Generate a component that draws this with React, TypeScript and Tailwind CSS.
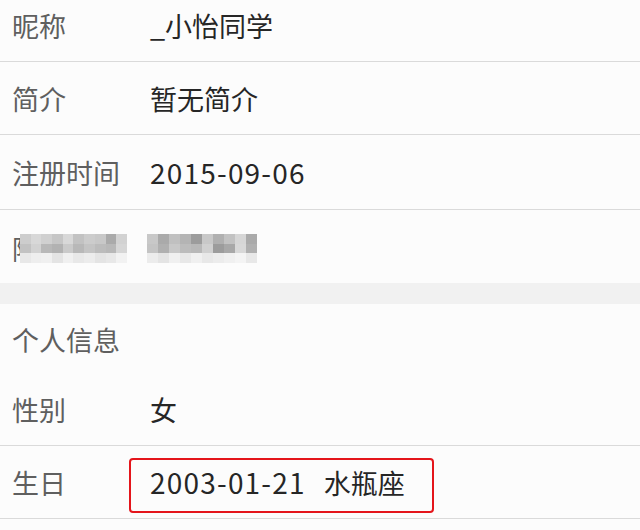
const labelMosaic = [
  ['bg-[#cdcdcd]', 'bg-[#d8d8d8]', 'bg-[#d0d0d0]', 'bg-[#c6c6c6]', 'bg-[#d8d8d8]', 'bg-[#c2c2c2]', 'bg-[#cccccc]', 'bg-[#c8c8c8]', 'bg-[#aaaaaa]', 'bg-[#d2d2d2]'],
  ['bg-[#c2c2c2]', 'bg-[#d2d2d2]', 'bg-[#b8b8b8]', 'bg-[#b2b2b2]', 'bg-[#cacaca]', 'bg-[#b8b8b8]', 'bg-[#c4c4c4]', 'bg-[#bcbcbc]', 'bg-[#b8b8b8]', 'bg-[#d6d6d6]'],
  ['bg-[#e8e8e8]', 'bg-[#eeeeee]', 'bg-[#f0f0f0]', 'bg-[#e4e4e4]', 'bg-[#f0f0f0]', 'bg-[#e8e8e8]', 'bg-[#ececec]', 'bg-[#e4e4e4]', 'bg-[#e8e8e8]', 'bg-[#f2f2f2]'],
];

const valueMosaic = [
  ['bg-[#c8c8c8]', 'bg-[#aaaaaa]', 'bg-[#c0c0c0]', 'bg-[#b4b4b4]', 'bg-[#9c9c9c]', 'bg-[#c8c8c8]', 'bg-[#b0b0b0]', 'bg-[#c2c2c2]', 'bg-[#d6d6d6]', 'bg-[#aaaaaa]'],
  ['bg-[#c4c4c4]', 'bg-[#b0b0b0]', 'bg-[#c8c8c8]', 'bg-[#bcbcbc]', 'bg-[#b8b8b8]', 'bg-[#d0d0d0]', 'bg-[#9c9c9c]', 'bg-[#a8a8a8]', 'bg-[#d8d8d8]', 'bg-[#b0b0b0]'],
  ['bg-[#ececec]', 'bg-[#e4e4e4]', 'bg-[#f0f0f0]', 'bg-[#e8e8e8]', 'bg-[#f0f0f0]', 'bg-[#e8e8e8]', 'bg-[#ececec]', 'bg-[#f0f0f0]', 'bg-[#f4f4f4]', 'bg-[#e8e8e8]'],
];

function Mosaic({ cells, width }: { cells: string[][]; width: string }) {
  return (
    <div className={`grid grid-cols-10 ${width}`}>
      {cells.flat().map((c, i) => (
        <div key={i} className={`h-[9.5px] ${c}`} />
      ))}
    </div>
  );
}

function Row({ label, children, divider = true, h = 'h-[73px]' }: { label: string; children?: React.ReactNode; divider?: boolean; h?: string }) {
  return (
    <div className={`flex items-center ${h} ${divider ? 'border-b border-[#dadada]' : ''}`}>
      <div className="w-[150px] pl-[12px] text-[#5f5f5f]">{label}</div>
      {children && <div className="text-[#262626]">{children}</div>}
    </div>
  );
}

// 数字在原图里更宽一点
function Digits({ children }: { children: string }) {
  return <span className="text-[28px] tracking-[1.2px]">{children}</span>;
}

export default function App() {
  return (
    <div
      className="w-[640px] h-[530px] overflow-hidden bg-[#fcfcfc] text-[27px] leading-none"
      style={{ fontFamily: '"Noto Sans CJK SC", "Noto Sans", sans-serif' }}
    >
      <Row label="昵称" h="h-[62px] pb-[10px]">_小怡同学</Row>
      <Row label="简介">暂无简介</Row>
      <Row label="注册时间" h="h-[75px]">
        <Digits>2015-09-06</Digits>
      </Row>

      {/* 打码的一行 */}
      <div className="flex items-center h-[73px] pt-[4px]">
        <div className="w-[147px] pl-[12px] flex items-center text-[#5f5f5f]">
          <span className="w-[8px] overflow-hidden">隐</span>
          <Mosaic cells={labelMosaic} width="w-[107px]" />
        </div>
        <Mosaic cells={valueMosaic} width="w-[110px]" />
      </div>

      <div className="h-[21px] bg-[#f1f1f1]" />

      <Row label="个人信息" divider={false} h="h-[70px]" />
      <Row label="性别" h="h-[72px]">女</Row>

      <div className="flex items-center h-[73px] border-b border-[#dadada]">
        <div className="w-[150px] pl-[12px] text-[#5f5f5f]">生日</div>
        <div className="relative text-[#262626]">
          <Digits>2003-01-21</Digits>
          <span className="ml-[18px]">水瓶座</span>
          <div className="absolute left-[-21px] top-[-10px] w-[305px] h-[55px] border-[2.5px] border-[#e4151b] rounded-[4px]" />
        </div>
      </div>
    </div>
  );
}
